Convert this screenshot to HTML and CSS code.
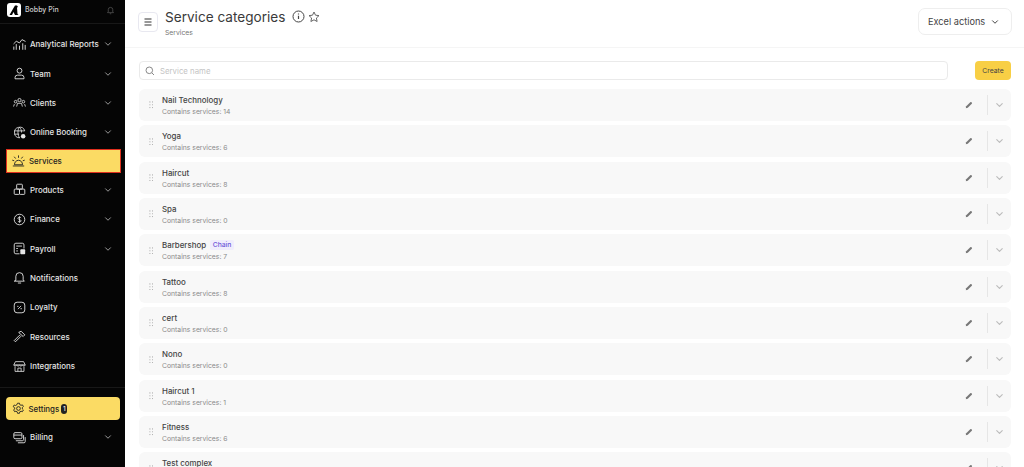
FILE: index.html
```html
<!DOCTYPE html>
<html lang="en">
<head>
    <meta charset="UTF-8">
    <meta name="viewport" content="width=device-width, initial-scale=1.0">
    <title>Service categories</title>
    <link rel="stylesheet" href="styles.css">
</head>
<body>
    <svg class="sprite" width="0" height="0">
        <defs>
            <symbol id="chev" viewBox="0 0 12 12"><path d="M3 4.5 6 7.5 9 4.5" fill="none" stroke="currentColor" stroke-width="1.2" stroke-linecap="round" stroke-linejoin="round"/></symbol>
            <symbol id="grip" viewBox="0 0 6 10"><g fill="currentColor"><circle cx="1.2" cy="1.2" r=".8"/><circle cx="4.8" cy="1.2" r=".8"/><circle cx="1.2" cy="5" r=".8"/><circle cx="4.8" cy="5" r=".8"/><circle cx="1.2" cy="8.8" r=".8"/><circle cx="4.8" cy="8.8" r=".8"/></g></symbol>
            <symbol id="pen" viewBox="0 0 10 10"><path d="M1 9 1.5 6.6 6.6 1.5a1 1 0 0 1 1.4 0l.5.5a1 1 0 0 1 0 1.4L3.4 8.5Z" fill="currentColor"/></symbol>
        </defs>
    </svg>

    <aside class="sidebar">
        <div class="account">
            <span class="logo"><svg width="14" height="14" viewBox="0 0 14 14"><path d="M2.500 12 6.500 5 8 2.500h2L11 4l-1 .6.500 6.400 1 1H8L6.500 9 5 12Z" fill="#000"/></svg></span>
            <span class="account-name">Bobby Pin</span>
            <svg class="bell-small" width="9" height="10" viewBox="0 0 12 12"><path d="M3 8.500V5.500a3 3 0 0 1 6 0v3l1 1H2ZM5 11h2" fill="none" stroke="currentColor"/></svg>
        </div>

        <nav class="menu">
            <a class="item"><svg class="ico" viewBox="0 0 16 16"><path d="M1 14v-3M4 14V8M8 14v-4M12 14V7M15 14V9M1 7l3-3 4 2 3-4 4 2" fill="none" stroke="currentColor" stroke-width="1.100" stroke-linecap="round"/></svg><span>Analytical Reports</span><svg class="chev"><use href="#chev"/></svg></a>
            <a class="item"><svg class="ico" viewBox="0 0 16 16"><circle cx="8" cy="4.500" r="3" fill="none" stroke="currentColor" stroke-width="1.100"/><path d="M2.500 14.500v-1.500a3 3 0 0 1 3-3h5a3 3 0 0 1 3 3v1.500Z" fill="none" stroke="currentColor" stroke-width="1.100"/></svg><span>Team</span><svg class="chev"><use href="#chev"/></svg></a>
            <a class="item"><svg class="ico" viewBox="0 0 16 16"><g fill="none" stroke="currentColor" stroke-width="1"><circle cx="8" cy="5" r="2"/><circle cx="3.200" cy="7" r="1.600"/><circle cx="12.800" cy="7" r="1.600"/><path d="M4.500 13l1-4h5l1 4M.7 13l1-3M15.300 13l-1-3"/></g></svg><span>Clients</span><svg class="chev"><use href="#chev"/></svg></a>
            <a class="item"><svg class="ico" viewBox="0 0 16 16"><g fill="none" stroke="currentColor" stroke-width="1"><path d="M8.500 14.500a6.500 6.500 0 1 1 6-8.500M1.500 6h13M1.500 10h6M8 1.500C5.500 4 5.500 11 8 14.500M8 1.500c1.800 1.800 2.500 4 2.500 6.500"/></g><circle cx="12.500" cy="12.500" r="2.800" fill="currentColor"/></svg><span>Online Booking</span><svg class="chev"><use href="#chev"/></svg></a>
            <a class="item item-active"><svg class="ico" viewBox="0 0 16 16"><g fill="none" stroke="currentColor" stroke-width="1.100" stroke-linecap="round"><path d="M3 11.500a5 5 0 0 1 10 0ZM1.500 13.500h13M8 1v2M3 2.500 4.200 4M13 2.500 11.800 4M.8 6.500 2.300 7M15.200 6.500 13.700 7"/></g></svg><span>Services</span></a>
            <a class="item"><svg class="ico" viewBox="0 0 16 16"><g fill="none" stroke="currentColor" stroke-width="1.100"><rect x="4.500" y="1.500" width="7" height="6" rx="1"/><rect x="1.500" y="7.500" width="6.500" height="6.500" rx="1"/><rect x="8" y="7.500" width="6.500" height="6.500" rx="1"/></g></svg><span>Products</span><svg class="chev"><use href="#chev"/></svg></a>
            <a class="item"><svg class="ico" viewBox="0 0 16 16"><circle cx="8" cy="8" r="6.500" fill="none" stroke="currentColor" stroke-width="1.100"/><path d="M10 6C9.500 5 6 4.800 6 6.500S10 8 10 9.700 6.500 11 6 10M8 4v8" fill="none" stroke="currentColor"/></svg><span>Finance</span><svg class="chev"><use href="#chev"/></svg></a>
            <a class="item"><svg class="ico" viewBox="0 0 16 16"><path d="M8 14.500H3.500a2 2 0 0 1-2-2v-9a2 2 0 0 1 2-2h8a2 2 0 0 1 2 2V8M4 5h7M4 8h2M4 11h2" fill="none" stroke="currentColor" stroke-width="1.100"/><rect x="9" y="9" width="6" height="6" rx="1" fill="currentColor"/></svg><span>Payroll</span><svg class="chev"><use href="#chev"/></svg></a>
            <a class="item"><svg class="ico" viewBox="0 0 16 16"><path d="M3.500 11V6.500a4.500 4.500 0 0 1 9 0V11l1.500 1.500H2ZM6.500 14.800h3" fill="none" stroke="currentColor" stroke-width="1.100" stroke-linecap="round"/></svg><span>Notifications</span></a>
            <a class="item"><svg class="ico" viewBox="0 0 16 16"><rect x="1.500" y="1.500" width="13" height="13" rx="3.500" fill="none" stroke="currentColor" stroke-width="1.100"/><path d="M6 10l4-4" stroke="currentColor"/><circle cx="6" cy="6.500" r=".8" fill="currentColor"/><circle cx="10" cy="9.500" r=".8" fill="currentColor"/></svg><span>Loyalty</span></a>
            <a class="item"><svg class="ico" viewBox="0 0 16 16"><path d="M1.500 13 8 6.500l1.500 1.500L3 14.500ZM7 3l3-1.500 4.500 4.500-2 2L7 3Z" fill="none" stroke="currentColor" stroke-width="1.100" stroke-linejoin="round"/></svg><span>Resources</span></a>
            <a class="item"><svg class="ico" viewBox="0 0 16 16"><path d="M3 2h10l2 4H1ZM1 6c0 2 3 2 3.500 0 .5 2 3 2 3.500 0 .5 2 3 2 3.500 0 .5 2 3.500 2 3.500 0M2.500 8.500V14h11V8.500M6 14v-4h4v4" fill="none" stroke="currentColor" stroke-width="1"/></svg><span>Integrations</span></a>
        </nav>

        <div class="menu-bottom">
            <a class="item item-settings"><svg class="ico" viewBox="0 0 16 16"><circle cx="8" cy="8" r="2.300" fill="none" stroke="currentColor" stroke-width="1.100"/><path d="M6.800 1.500h2.400l.4 1.800 1.500.8 1.700-.6 1.200 2.100-1.300 1.300v1.600l1.300 1.300-1.200 2.100-1.700-.6-1.500.8-.4 1.800H6.800l-.4-1.800-1.500-.8-1.700.6-1.200-2.100 1.300-1.300V7.100L1.500 5.800l1.200-2.100 1.700.6 1.500-.8Z" fill="none" stroke="currentColor" stroke-width="1.100" stroke-linejoin="round"/></svg><span>Settings</span><b class="count">1</b></a>
            <a class="item"><svg class="ico" viewBox="0 0 16 16"><g fill="none" stroke="currentColor" stroke-width="1.100"><rect x="1" y="2" width="10" height="7.500" rx="1.500"/><path d="M1 5h10M3.500 12H11.500a1.500 1.500 0 0 0 1.500-1.500V5M6 14.500h7.500A1.500 1.500 0 0 0 15 13V7.500"/></g></svg><span>Billing</span><svg class="chev"><use href="#chev"/></svg></a>
        </div>
    </aside>

    <main class="content">
        <header class="topbar">
            <button class="menu-btn"><svg width="10" height="10" viewBox="0 0 10 10"><path d="M1.500 2h7M1.500 5h7M1.500 8h7" stroke="#333" stroke-width="1.200"/></svg></button>
            <div class="heading">
                <div class="title-row">
                    <h1>Service categories</h1>
                    <svg class="info" width="13" height="13" viewBox="0 0 13 13"><circle cx="6.500" cy="6.500" r="5.500" fill="none" stroke="currentColor"/><path d="M6.500 5.800v3.200M6.500 3.600v1" stroke="currentColor" stroke-width="1.200"/></svg>
                    <svg class="star" width="12" height="12" viewBox="0 0 12 12"><path d="M6 1l1.500 3.200 3.500.4-2.600 2.400.7 3.500L6 8.800 2.900 10.500l.7-3.500L1 4.600l3.500-.4Z" fill="none" stroke="currentColor"/></svg>
                </div>
                <div class="crumb">Services</div>
            </div>
            <button class="excel">Excel actions<svg class="chev"><use href="#chev"/></svg></button>
        </header>

        <section class="list-area">
            <div class="search-row">
                <label class="search">
                    <svg width="10" height="10" viewBox="0 0 10 10"><circle cx="4.300" cy="4.300" r="3.300" fill="none" stroke="#888"/><path d="M6.800 6.800 9 9" stroke="#888"/></svg>
                    <span>Service name</span>
                </label>
                <button class="create">Create</button>
            </div>

            <div class="row"><svg class="grip"><use href="#grip"/></svg><div class="row-text"><div class="row-name">Nail Technology</div><div class="row-sub">Contains services: 14</div></div><svg class="pen"><use href="#pen"/></svg><svg class="row-chev"><use href="#chev"/></svg></div>
            <div class="row"><svg class="grip"><use href="#grip"/></svg><div class="row-text"><div class="row-name">Yoga</div><div class="row-sub">Contains services: 6</div></div><svg class="pen"><use href="#pen"/></svg><svg class="row-chev"><use href="#chev"/></svg></div>
            <div class="row"><svg class="grip"><use href="#grip"/></svg><div class="row-text"><div class="row-name">Haircut</div><div class="row-sub">Contains services: 8</div></div><svg class="pen"><use href="#pen"/></svg><svg class="row-chev"><use href="#chev"/></svg></div>
            <div class="row"><svg class="grip"><use href="#grip"/></svg><div class="row-text"><div class="row-name">Spa</div><div class="row-sub">Contains services: 0</div></div><svg class="pen"><use href="#pen"/></svg><svg class="row-chev"><use href="#chev"/></svg></div>
            <div class="row"><svg class="grip"><use href="#grip"/></svg><div class="row-text"><div class="row-name">Barbershop <span class="tag">Chain</span></div><div class="row-sub">Contains services: 7</div></div><svg class="pen"><use href="#pen"/></svg><svg class="row-chev"><use href="#chev"/></svg></div>
            <div class="row"><svg class="grip"><use href="#grip"/></svg><div class="row-text"><div class="row-name">Tattoo</div><div class="row-sub">Contains services: 8</div></div><svg class="pen"><use href="#pen"/></svg><svg class="row-chev"><use href="#chev"/></svg></div>
            <div class="row"><svg class="grip"><use href="#grip"/></svg><div class="row-text"><div class="row-name">cert</div><div class="row-sub">Contains services: 0</div></div><svg class="pen"><use href="#pen"/></svg><svg class="row-chev"><use href="#chev"/></svg></div>
            <div class="row"><svg class="grip"><use href="#grip"/></svg><div class="row-text"><div class="row-name">Nono</div><div class="row-sub">Contains services: 0</div></div><svg class="pen"><use href="#pen"/></svg><svg class="row-chev"><use href="#chev"/></svg></div>
            <div class="row"><svg class="grip"><use href="#grip"/></svg><div class="row-text"><div class="row-name">Haircut 1</div><div class="row-sub">Contains services: 1</div></div><svg class="pen"><use href="#pen"/></svg><svg class="row-chev"><use href="#chev"/></svg></div>
            <div class="row"><svg class="grip"><use href="#grip"/></svg><div class="row-text"><div class="row-name">Fitness</div><div class="row-sub">Contains services: 6</div></div><svg class="pen"><use href="#pen"/></svg><svg class="row-chev"><use href="#chev"/></svg></div>
            <div class="row"><svg class="grip"><use href="#grip"/></svg><div class="row-text"><div class="row-name">Test complex</div><div class="row-sub">&nbsp;</div></div><svg class="pen"><use href="#pen"/></svg><svg class="row-chev"><use href="#chev"/></svg></div>
        </section>
    </main>
</body>
</html>
```

FILE: styles.css
```css
* {
    box-sizing: border-box;
}
html, body {
    height: 467px;
    overflow: hidden;
}
body {
    margin: 0;
    display: flex;
    font-family: Inter, "Liberation Sans", sans-serif;
    background: #fff;
    color: #333;
}
.sprite {
    position: absolute;
}

/* sidebar */
.sidebar {
    width: 125px;
    flex: none;
    height: 467px;
    background: #050505;
    color: #e6e6e6;
    display: flex;
    flex-direction: column;
}
.account {
    height: 24px;
    display: flex;
    align-items: center;
    padding: 0 10px 4px 7px;
    border-bottom: 1px solid #181818;
}
.logo {
    width: 14px;
    height: 14px;
    background: #fff;
    border-radius: 3px;
    display: flex;
    margin-right: 4px;
}
.account-name {
    font-size: 7px;
    font-weight: 500;
    flex: 1;
    color: #ccc;
}
.bell-small {
    color: #555;
}
.menu {
    padding-top: 5.5px;
}
.item {
    height: 29.4px;
    display: flex;
    align-items: center;
    padding: 0 12px 0 13px;
    font-size: 7.9px;
    font-weight: 500;
}
.ico {
    width: 13px;
    height: 13px;
    margin-right: 4px;
    flex: none;
}
.item span {
    flex: 1;
    white-space: nowrap;
}
.chev {
    width: 10px;
    height: 10px;
    flex: none;
    color: #999;
}
.item-active {
    height: 24px;
    margin: 2px 4.5px 2px 5.5px;
    padding: 0 7px 0 5.5px;
    background: #fbdb64;
    border: 1px solid #e0301e;
    color: #222;
}
.menu-bottom {
    margin-top: 6.5px;
    padding-top: 9px;
    border-top: 1px solid #181818;
}
.item-settings {
    height: 23px;
    margin: 0 5px 2.5px 5.5px;
    padding: 0 6px;
    background: #fbdb64;
    border-radius: 4px;
    color: #222;
}
.item-settings span {
    flex: none;
}
.count {
    background: #222;
    color: #eee;
    font-size: 6.5px;
    font-weight: 500;
    width: 6px;
    height: 10px;
    border-radius: 3px;
    margin-left: 2px;
    text-align: center;
    line-height: 10px;
}

/* main */
.content {
    flex: 1;
    min-width: 0;
}
.topbar {
    height: 48px;
    display: flex;
    align-items: flex-start;
    padding: 12px 12px 0 13px;
    border-bottom: 1px solid #f5f5f5;
}
.menu-btn {
    width: 20px;
    height: 20px;
    padding: 0;
    background: #fff;
    border: 1px solid #e8e8f0;
    border-radius: 4px;
    display: flex;
    align-items: center;
    justify-content: center;
}
.heading {
    flex: 1;
    margin: -4px 0 0 7px;
}
.title-row {
    display: flex;
    align-items: center;
    height: 17px;
}
h1 {
    margin: 0 7px 0 0;
    font-size: 13.6px;
    font-weight: 400;
    color: #3a3a3a;
}
.info {
    color: #444;
    margin-right: 3px;
}
.star {
    color: #666;
}
.crumb {
    font-size: 6.8px;
    color: #777;
    margin-top: 3px;
}
.excel {
    width: 94px;
    height: 27px;
    margin-top: -4px;
    padding: 0 11px 0 9px;
    background: #fff;
    border: 1px solid #eee;
    border-radius: 7px;
    display: flex;
    align-items: center;
    justify-content: space-between;
    font-family: inherit;
    font-size: 9.2px;
    color: #444;
}
.excel .chev {
    color: #444;
}
.list-area {
    padding: 13px 13px 0 14px;
}
.search-row {
    display: flex;
    align-items: center;
    margin-bottom: 9px;
}
.search {
    flex: 1;
    height: 19px;
    display: flex;
    align-items: center;
    gap: 5px;
    padding: 0 5px;
    border: 1px solid #eaeaea;
    border-radius: 4px;
    font-size: 7.8px;
    color: #c4c4c4;
}
.create {
    width: 36px;
    height: 19px;
    margin-left: 27px;
    padding: 0;
    background: #f8cf45;
    border: 0;
    border-radius: 4px;
    font-family: inherit;
    font-size: 6.8px;
    color: #444;
}
.row {
    height: 32px;
    margin-bottom: 4.35px;
    display: flex;
    align-items: center;
    background: #f8f8f8;
    border-radius: 6px;
}
.grip {
    width: 4.5px;
    height: 7.5px;
    margin-left: 9.5px;
    color: #aaa;
    flex: none;
}
.row-text {
    flex: 1;
    margin-left: 9px;
}
.row-name {
    font-size: 7.9px;
    font-weight: 500;
    color: #444;
    line-height: 12px;
}
.row-sub {
    font-size: 6.8px;
    color: #8a8a8a;
    margin-top: 1px;
    line-height: 9px;
}
.tag {
    display: inline-block;
    margin-left: 2px;
    padding: 0 2.5px;
    background: #f0edfc;
    border-radius: 2px;
    font-size: 6.8px;
    color: #6e59d9;
    line-height: 10px;
    vertical-align: 1px;
}
.pen {
    width: 8px;
    height: 8px;
    color: #777;
    flex: none;
}
.row-chev {
    width: 24px;
    height: 20px;
    margin-left: 14px;
    padding: 0 6px;
    color: #bbb;
    border-left: 1px solid #e6e6e6;
    flex: none;
}
```
